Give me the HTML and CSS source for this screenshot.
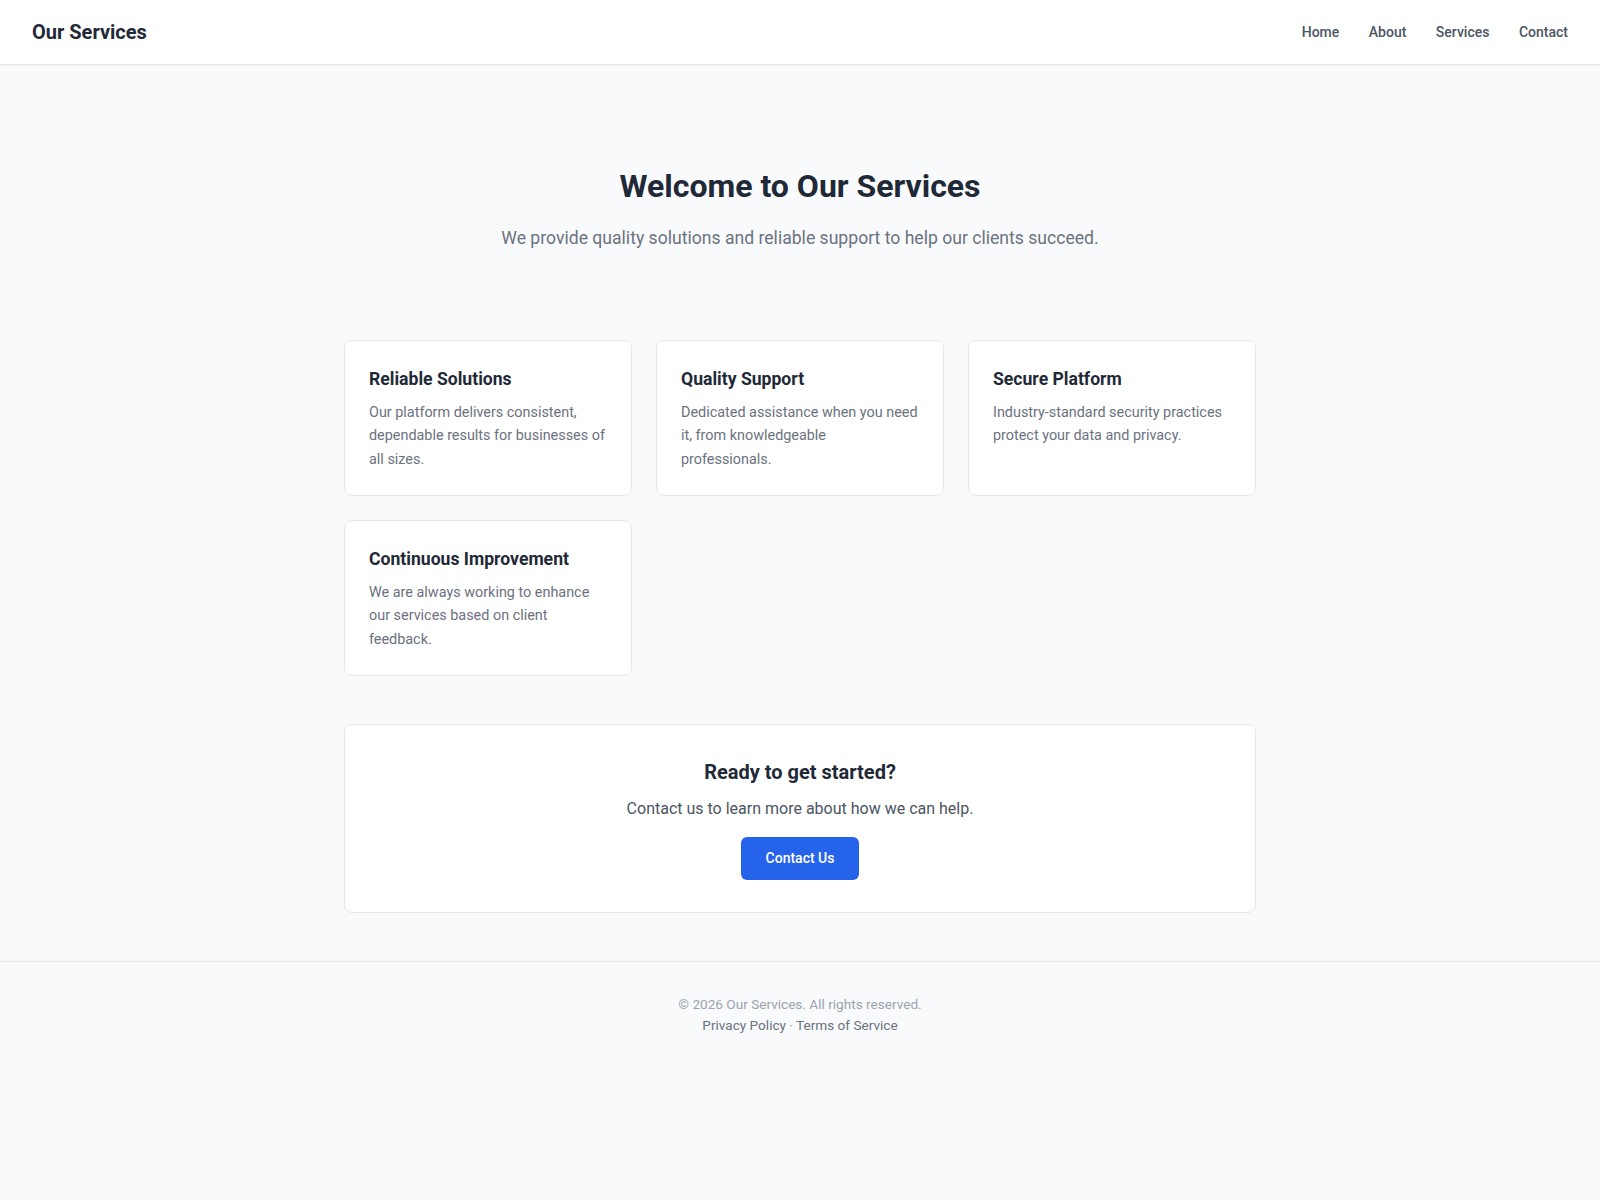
FILE: index.html
```html
<!DOCTYPE html>
<html lang="en">
<head>
  <meta charset="UTF-8" />
  <meta name="viewport" content="width=device-width, initial-scale=1.0"/>
  <title>Our Services</title>
  <link rel="stylesheet" href="styles.css">
</head>
<body>
  <header class="site-header">
    <div class="logo">Our Services</div>
    <nav class="nav">
      <a href="#">Home</a>
      <a href="#">About</a>
      <a href="#">Services</a>
      <a href="#">Contact</a>
    </nav>
  </header>

  <main class="main">
    <section class="hero">
      <h1>Welcome to Our Services</h1>
      <p>We provide quality solutions and reliable support to help our clients succeed.</p>
    </section>

    <section class="cards">
      <div class="card">
        <h3>Reliable Solutions</h3>
        <p>Our platform delivers consistent, dependable results for businesses of all sizes.</p>
      </div>
      <div class="card">
        <h3>Quality Support</h3>
        <p>Dedicated assistance when you need it, from knowledgeable professionals.</p>
      </div>
      <div class="card">
        <h3>Secure Platform</h3>
        <p>Industry-standard security practices protect your data and privacy.</p>
      </div>
      <div class="card">
        <h3>Continuous Improvement</h3>
        <p>We are always working to enhance our services based on client feedback.</p>
      </div>
    </section>

    <section class="cta">
      <h2>Ready to get started?</h2>
      <p>Contact us to learn more about how we can help.</p>
      <button class="btn">Contact Us</button>
    </section>
  </main>

  <footer class="site-footer">
    <p class="copy">&copy; 2026 Our Services. All rights reserved.</p>
    <p class="links"><a href="#">Privacy Policy</a> · <a href="#">Terms of Service</a></p>
  </footer>
</body>
</html>
```

FILE: styles.css
```css
body {
  margin: 0;
  font-family: Roboto, 'Liberation Sans', sans-serif;
  background: #f9fafb;
  color: #1f2937;
}

a {
  color: inherit;
  text-decoration: none;
}

.site-header {
  height: 65px;
  box-sizing: border-box;
  padding: 0 32px;
  display: flex;
  align-items: center;
  justify-content: space-between;
  background: #fff;
  border-bottom: 1px solid #e5e7eb;
  box-shadow: 0 1px 2px rgba(0, 0, 0, 0.04);
}

.logo {
  font-size: 20px;
  font-weight: 700;
  color: #1f2937;
}

.nav {
  display: flex;
  gap: 29.5px;
}

.nav a {
  font-size: 14px;
  font-weight: 500;
  color: #4b5563;
}

.main {
  width: 912px;
  margin: 0 auto;
  padding-bottom: 48px;
}

.hero {
  text-align: center;
  padding: 101px 0 88px;
}

.hero h1 {
  margin: 0 0 18px;
  font-size: 32px;
  line-height: 40px;
  font-weight: 700;
}

.hero p {
  margin: 0;
  font-size: 17.6px;
  line-height: 28px;
  color: #6b7280;
}

.cards {
  display: grid;
  grid-template-columns: repeat(3, 1fr);
  gap: 24px;
}

.card {
  background: #fff;
  border: 1px solid #e5e7eb;
  border-radius: 8px;
  padding: 24px;
}

.card h3 {
  margin: 0 0 8px;
  font-size: 17.6px;
  line-height: 28px;
  font-weight: 700;
}

.card p {
  margin: 0;
  font-size: 14.4px;
  line-height: 1.62;
  color: #6b7280;
}

.cta {
  margin-top: 48px;
  background: #fff;
  border: 1px solid #e5e7eb;
  border-radius: 8px;
  padding: 33px 24px 32px;
  text-align: center;
}

.cta h2 {
  margin: 0 0 11px;
  font-size: 20px;
  line-height: 28px;
  font-weight: 700;
}

.cta p {
  margin: 0 0 16px;
  font-size: 16px;
  line-height: 24px;
  color: #4b5563;
}

.btn {
  font-family: inherit;
  font-size: 14px;
  font-weight: 500;
  line-height: 20px;
  padding: 11.5px 25px;
  border: none;
  border-radius: 6px;
  background: #2563eb;
  color: #fff;
  cursor: pointer;
}

.site-footer {
  border-top: 1px solid #e5e7eb;
  padding: 32px 0;
  text-align: center;
  font-size: 13.6px;
}

.site-footer p {
  margin: 0;
  line-height: 21px;
}

.copy {
  color: #9ca3af;
}

.links {
  color: #9ca3af;
}

.links a {
  color: #6b7280;
}
```
